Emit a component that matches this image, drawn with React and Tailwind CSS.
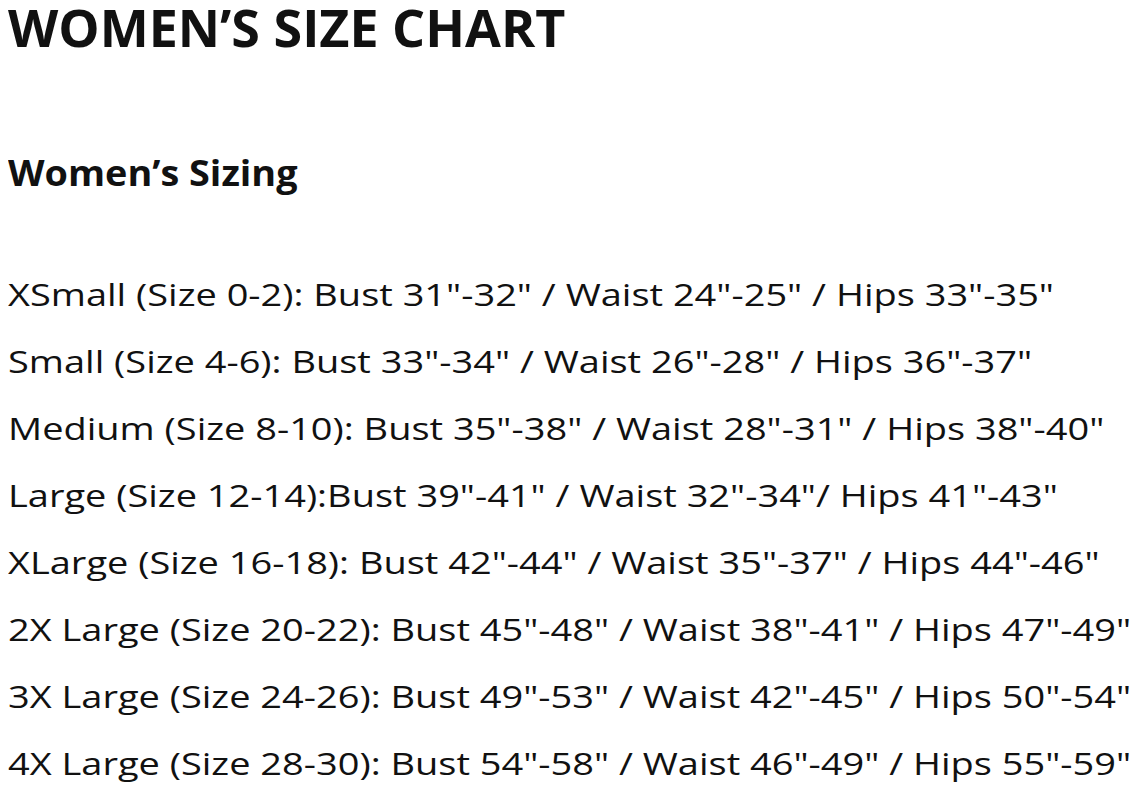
const rows = [
  'XSmall (Size 0-2): Bust 31"-32" / Waist 24"-25" / Hips 33"-35"',
  'Small (Size 4-6): Bust 33"-34" / Waist 26"-28" / Hips 36"-37"',
  'Medium (Size 8-10): Bust 35"-38" / Waist 28"-31" / Hips 38"-40"',
  'Large (Size 12-14):Bust 39"-41" / Waist 32"-34"/ Hips 41"-43"',
  'XLarge (Size 16-18): Bust 42"-44" / Waist 35"-37" / Hips 44"-46"',
  '2X Large (Size 20-22): Bust 45"-48" / Waist 38"-41" / Hips 47"-49"',
  '3X Large (Size 24-26): Bust 49"-53" / Waist 42"-45" / Hips 50"-54"',
  '4X Large (Size 28-30): Bust 54"-58" / Waist 46"-49" / Hips 55"-59"',
];

export default function App() {
  return (
    <div className="min-h-[800px] overflow-hidden bg-white pl-[8px] text-[#111] font-['Open_Sans',sans-serif]">
      <h1 className="whitespace-nowrap text-[52px] font-bold leading-[54px]">WOMEN’S SIZE CHART</h1>
      <h2 className="mt-[99px] origin-left scale-x-[1.08] whitespace-nowrap text-[35px] font-bold leading-[40px]">
        Women’s Sizing
      </h2>
      <div className="mt-[68px]">
        {rows.map((r) => (
          <p key={r} className="origin-left scale-x-[1.225] whitespace-nowrap text-[31px] leading-[67px]">
            {r}
          </p>
        ))}
      </div>
    </div>
  );
}
